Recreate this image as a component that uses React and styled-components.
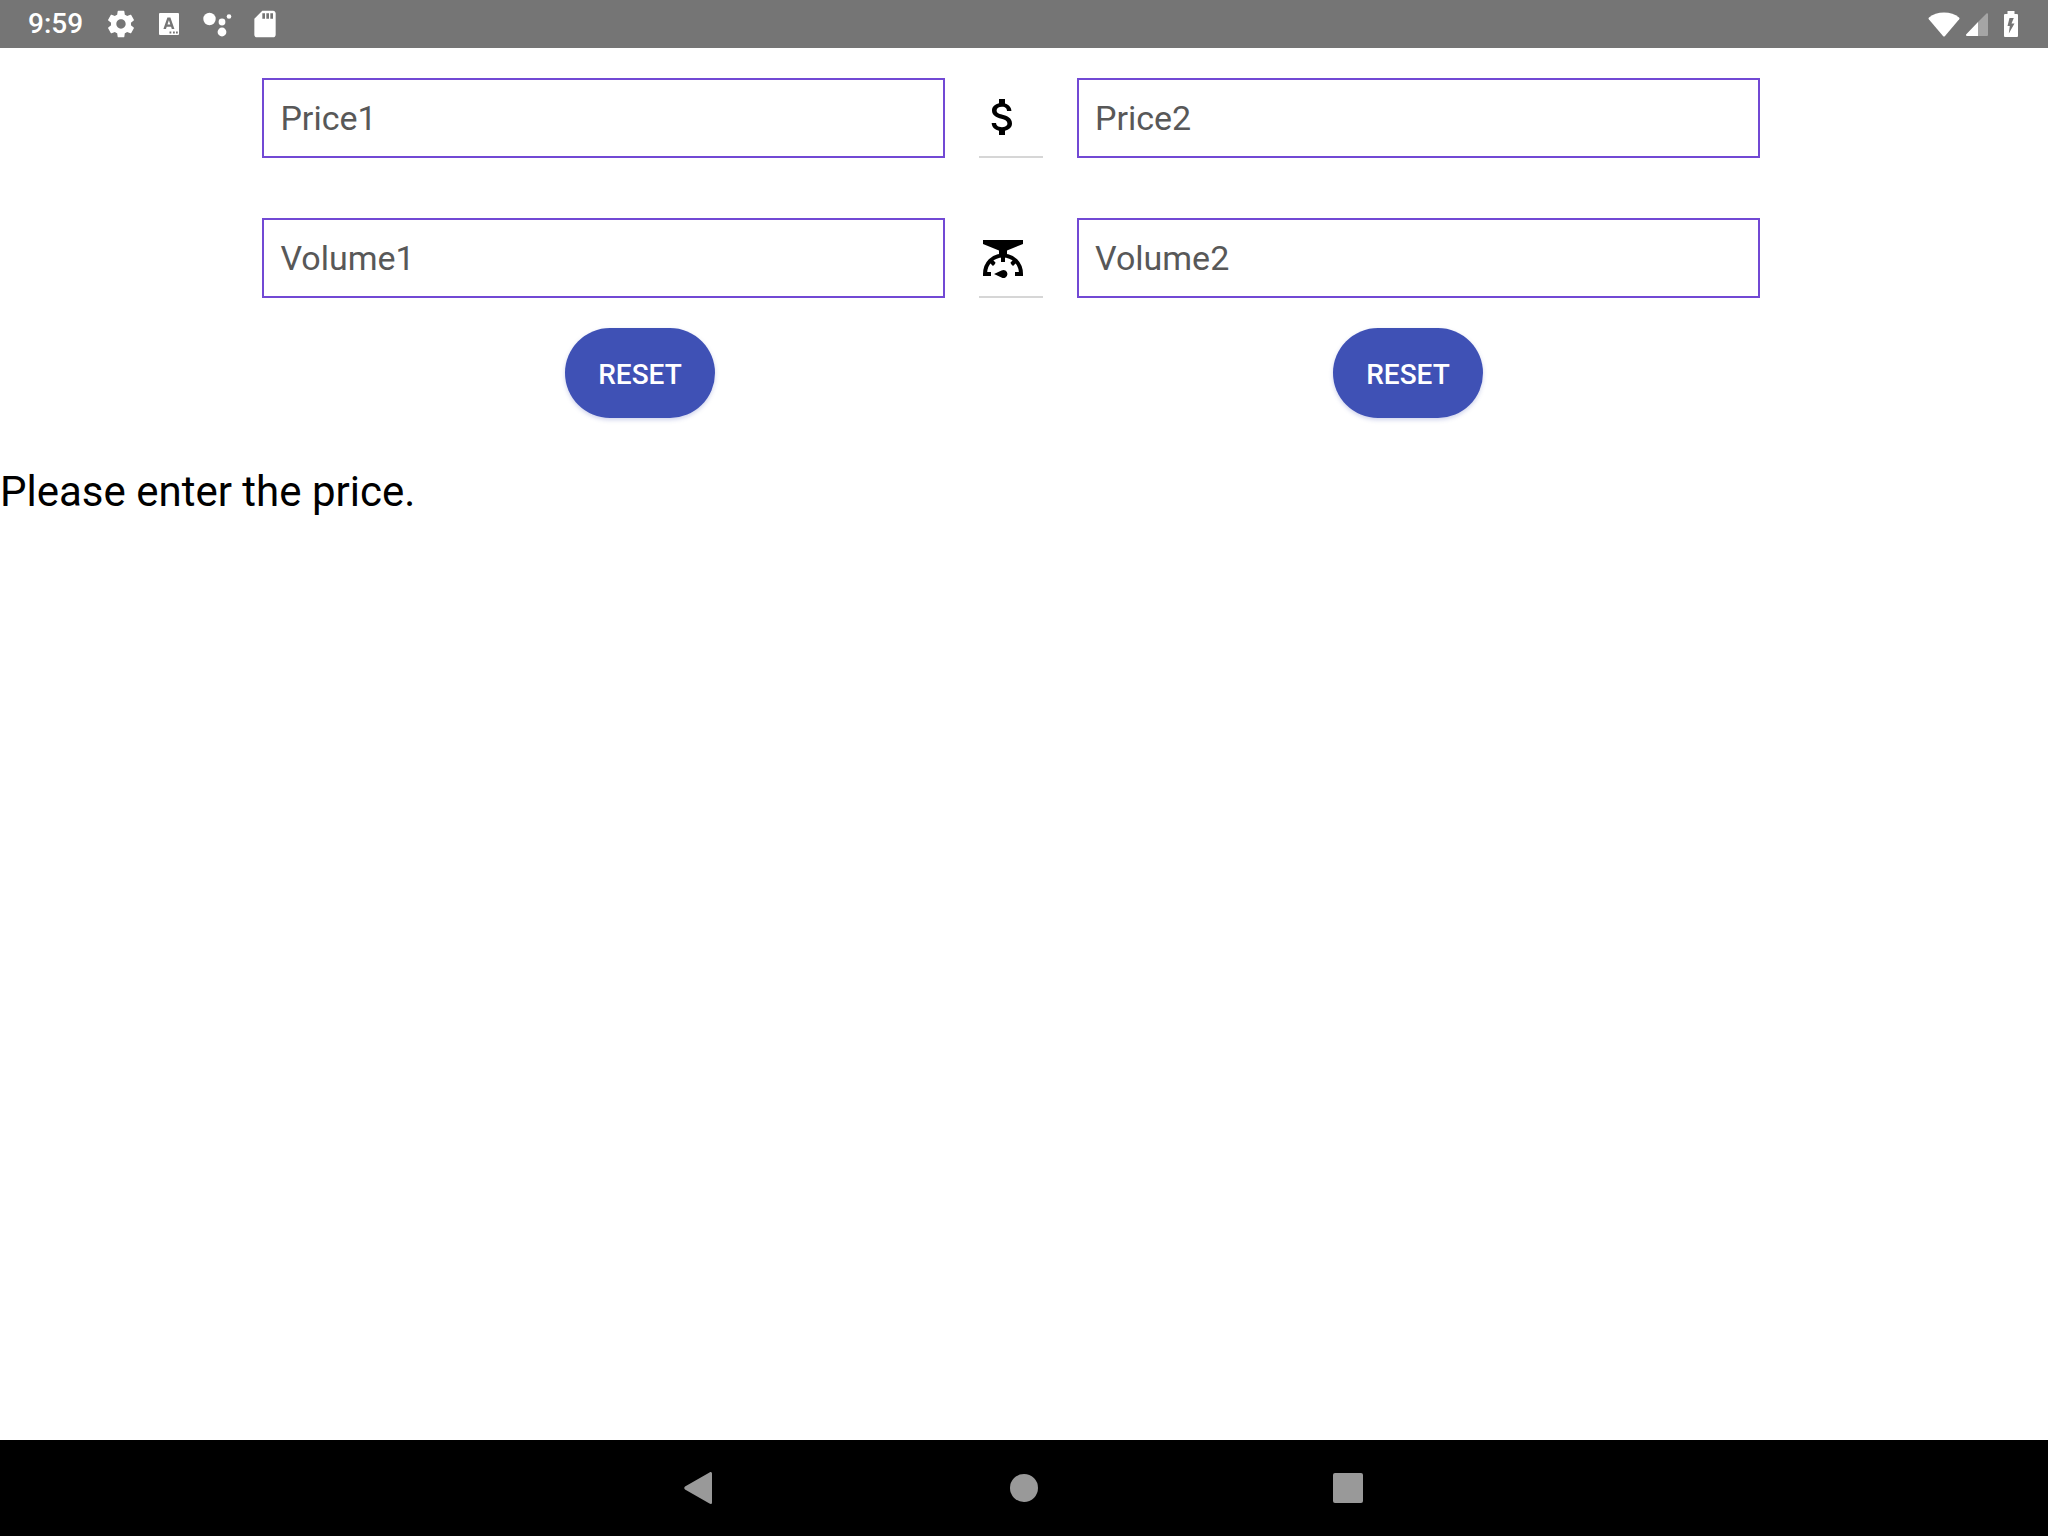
import React, { useState } from "react";
import styled, { createGlobalStyle } from "styled-components";

const GlobalStyle = createGlobalStyle`
  *, *::before, *::after { box-sizing: border-box; }
  body {
    margin: 0;
    background: #fff;
    color: #000;
    font-family: Roboto, "Noto Sans", sans-serif;
  }
`;

const Screen = styled.div`
  display: flex;
  flex-direction: column;
  min-height: 100vh;
`;

const StatusBar = styled.header`
  display: flex;
  align-items: center;
  justify-content: space-between;
  height: 48px;
  padding: 0 24px 0 28px;
  background: #757575;
  color: #fff;
`;

const StatusGroup = styled.div`
  display: flex;
  align-items: center;
  gap: ${(p) => p.$gap}px;
`;

const Clock = styled.time`
  padding-right: 6px;
  font-size: 28px;
  line-height: 32px;
  font-weight: 500;
`;

const Icon = styled.svg`
  display: block;
  flex: none;
  width: ${(p) => p.$size}px;
  height: ${(p) => p.$size}px;
  fill: currentColor;
`;

const Content = styled.main`
  display: flex;
  flex-direction: column;
  flex: 1;
  padding-top: 30px;
`;

const FieldRows = styled.div`
  display: flex;
  flex-direction: column;
  gap: 60px;
  padding-right: 26px;
`;

const FieldRow = styled.div`
  display: flex;
  justify-content: center;
  gap: 34px;
`;

const Field = styled.input`
  width: 33.33vw;
  height: 80px;
  padding: 0 16px;
  border: 2px solid #7249d4;
  border-radius: 0;
  background: #fff;
  color: #000;
  font: inherit;
  font-size: 34px;
  outline: none;

  &::placeholder {
    color: #585858;
    opacity: 1;
  }
`;

const UnitMark = styled.div`
  display: flex;
  align-items: center;
  width: 64px;
  border-bottom: 2px solid #d6d6d6;
`;

const Actions = styled.div`
  display: grid;
  grid-template-columns: 1fr 1fr;
  justify-items: center;
  width: 75%;
  margin: 30px auto 0;
`;

const ResetButton = styled.button`
  width: 150px;
  height: 90px;
  padding: 2px 0 0;
  border: 0;
  border-radius: 45px;
  background: #3f51b5;
  box-shadow: 0 2px 4px rgba(63, 81, 181, 0.25);
  color: #fff;
  font: inherit;
  font-size: 28px;
  font-weight: 500;
  text-transform: uppercase;
`;

const Message = styled.p`
  margin: 50px 0 0;
  font-size: 42px;
  line-height: 48px;
`;

const NavBar = styled.nav`
  display: flex;
  align-items: center;
  justify-content: center;
  gap: 276px;
  height: 96px;
  background: #000;
`;

const NavButton = styled.button`
  padding: 0;
  border: 0;
  background: none;
  color: #999;
`;

const GearIcon = () => (
  <Icon $size={32} viewBox="0 0 24 24">
    <path d="M19.43 12.98c.04-.32.07-.64.07-.98s-.03-.66-.07-.98l2.11-1.65c.19-.15.24-.42.12-.64l-2-3.46c-.12-.22-.39-.3-.61-.22l-2.49 1c-.52-.4-1.08-.73-1.69-.98l-.38-2.65C14.46 2.18 14.25 2 14 2h-4c-.25 0-.46.18-.49.42l-.38 2.65c-.61.25-1.17.59-1.69.98l-2.49-1c-.23-.09-.49 0-.61.22l-2 3.46c-.13.22-.07.49.12.64l2.11 1.65c-.04.32-.07.65-.07.98s.03.66.07.98l-2.11 1.65c-.19.15-.24.42-.12.64l2 3.46c.12.22.39.3.61.22l2.49-1c.52.4 1.08.73 1.69.98l.38 2.65c.03.24.24.42.49.42h4c.25 0 .46-.18.49-.42l.38-2.65c.61-.25 1.17-.59 1.69-.98l2.49 1c.23.09.49 0 .61-.22l2-3.46c.12-.22.07-.49-.12-.64l-2.11-1.65zM12 15.500c-1.930 0-3.500-1.570-3.500-3.500s1.570-3.500 3.500-3.500 3.500 1.570 3.500 3.500-1.570 3.500-3.500 3.500z" />
  </Icon>
);

const KeyboardIcon = () => (
  <Icon $size={32} viewBox="0 0 32 32">
    <path
      fillRule="evenodd"
      d="M7 5h18a1 1 0 0 1 1 1v20a1 1 0 0 1-1 1H7a1 1 0 0 1-1-1V6a1 1 0 0 1 1-1zM14.400 9.500 10.400 21h2.600l.7-2.300h4.400l.7 2.300h2.600L17.400 9.500zM15.900 12.300l1.400 4.300h-2.800zM16.500 23.600v1.800h1.800v-1.800zM20 23.600v1.800h1.800v-1.800zM23 23.600v1.800h1.800v-1.800z"
    />
  </Icon>
);

const AssistantIcon = () => (
  <Icon $size={32} viewBox="0 0 32 32">
    <circle cx="8.500" cy="11" r="6.200" />
    <circle cx="21" cy="14" r="3.400" />
    <circle cx="21" cy="24" r="4.400" />
    <circle cx="28" cy="8.500" r="2.300" />
  </Icon>
);

const SdCardIcon = () => (
  <Icon $size={32} viewBox="0 0 24 24">
    <path d="M18 2h-8L4.020 8 4 20c0 1.100.9 2 2 2h12c1.100 0 2-.9 2-2V4c0-1.100-.9-2-2-2zm-6 6h-2V4h2v4zm3 0h-2V4h2v4zm3 0h-2V4h2v4z" />
  </Icon>
);

const WifiIcon = () => (
  <Icon $size={32} viewBox="0 0 32 32">
    <path d="M16 4.500c6 0 11 1.900 15 4.900.6.500.7 1.200.2 1.800L17 28c-.6.700-1.400.7-2 0L.8 11.200c-.5-.6-.4-1.300.2-1.800C5 6.400 10 4.500 16 4.500z" />
  </Icon>
);

const SignalIcon = () => (
  <Icon $size={32} viewBox="0 0 32 32">
    <path opacity=".35" d="M18 14 26.500 5.500c.6-.6 1.500-.2 1.500.6V27a1 1 0 0 1-1 1h-9z" />
    <path d="M18 14v14H7c-1 0-1.400-1-.7-1.700z" />
  </Icon>
);

const BatteryIcon = () => (
  <Icon $size={32} viewBox="-3 0 32 32">
    <path
      fillRule="evenodd"
      d="M12.500 3h7v3h2.200c.8 0 1.300.5 1.300 1.300v20.400c0 .8-.5 1.300-1.300 1.300H10.300C9.500 29 9 28.500 9 27.700V7.300C9 6.500 9.500 6 10.300 6h2.200zM14.500 10 12.500 18h2.300l-1 7.500 5.700-10h-3l2.300-5.500z"
    />
  </Icon>
);

const DollarIcon = () => (
  <Icon $size={48} viewBox="0 0 24 24">
    <path d="M11.8 10.9c-2.27-.59-3-1.2-3-2.15 0-1.09 1.01-1.85 2.7-1.85 1.78 0 2.44.85 2.5 2.1h2.21c-.07-1.72-1.12-3.3-3.21-3.81V3h-3v2.16c-1.94.42-3.5 1.68-3.5 3.61 0 2.31 1.91 3.46 4.7 4.13 2.5.6 3 1.48 3 2.41 0 .69-.49 1.79-2.7 1.79-2.06 0-2.87-.92-2.98-2.1h-2.2c.12 2.19 1.76 3.42 3.68 3.83V21h3v-2.15c1.95-.37 3.5-1.5 3.5-3.55 0-2.84-2.43-3.81-4.7-4.4z" />
  </Icon>
);

const ScaleIcon = () => (
  <Icon $size={48} viewBox="0 1 48 48">
    <path d="M4 8h40v4l-16 6.500V23h-8v-4.500L4 12z" />
    <path
      d="M12 42H6c0-11 8-18.500 18-18.500S42 31 42 42h-6"
      fill="none"
      stroke="currentColor"
      strokeWidth="4"
    />
    <path d="M22 23h4v7h-4zM10.500 30.500l3-3 3 3-.5 1.500-2 2zM37.500 30.500l-3-3-3 3 .5 1.500 2 2z" />
    <path d="M15 42l7.500-3.500a4 4 0 1 1 0 7z" />
  </Icon>
);

const BackIcon = () => (
  <Icon $size={48} viewBox="0 0 48 48">
    <path d="M36 9.500v29c0 1.500-1.400 2-2.500 1.100L9 25.500c-1-.8-1-2.200 0-3L33.500 8.400c1.100-.9 2.500-.4 2.500 1.100z" />
  </Icon>
);

const HomeIcon = () => (
  <Icon $size={48} viewBox="0 0 48 48">
    <circle cx="24" cy="24" r="14" />
  </Icon>
);

const RecentsIcon = () => (
  <Icon $size={48} viewBox="0 0 48 48">
    <rect x="9" y="9" width="30" height="30" rx="2" />
  </Icon>
);

const emptyProduct = { price: "", volume: "" };

export default function App() {
  const [products, setProducts] = useState([emptyProduct, emptyProduct]);

  const update = (index, patch) =>
    setProducts((list) => list.map((p, i) => (i === index ? { ...p, ...patch } : p)));

  const field = (index, key, label) => (
    <Field
      aria-label={label}
      placeholder={label}
      inputMode="decimal"
      value={products[index][key]}
      onChange={(e) => update(index, { [key]: e.target.value })}
    />
  );

  return (
    <Screen>
      <GlobalStyle />
      <StatusBar>
        <StatusGroup $gap={16}>
          <Clock>9:59</Clock>
          <GearIcon />
          <KeyboardIcon />
          <AssistantIcon />
          <SdCardIcon />
        </StatusGroup>
        <StatusGroup $gap={0}>
          <WifiIcon />
          <SignalIcon />
          <BatteryIcon />
        </StatusGroup>
      </StatusBar>
      <Content>
        <FieldRows>
          <FieldRow>
            {field(0, "price", "Price1")}
            <UnitMark>
              <DollarIcon />
            </UnitMark>
            {field(1, "price", "Price2")}
          </FieldRow>
          <FieldRow>
            {field(0, "volume", "Volume1")}
            <UnitMark>
              <ScaleIcon />
            </UnitMark>
            {field(1, "volume", "Volume2")}
          </FieldRow>
        </FieldRows>
        <Actions>
          <ResetButton onClick={() => update(0, emptyProduct)}>Reset</ResetButton>
          <ResetButton onClick={() => update(1, emptyProduct)}>Reset</ResetButton>
        </Actions>
        <Message>Please enter the price.</Message>
      </Content>
      <NavBar>
        <NavButton aria-label="Back">
          <BackIcon />
        </NavButton>
        <NavButton aria-label="Home">
          <HomeIcon />
        </NavButton>
        <NavButton aria-label="Recent apps">
          <RecentsIcon />
        </NavButton>
      </NavBar>
    </Screen>
  );
}
